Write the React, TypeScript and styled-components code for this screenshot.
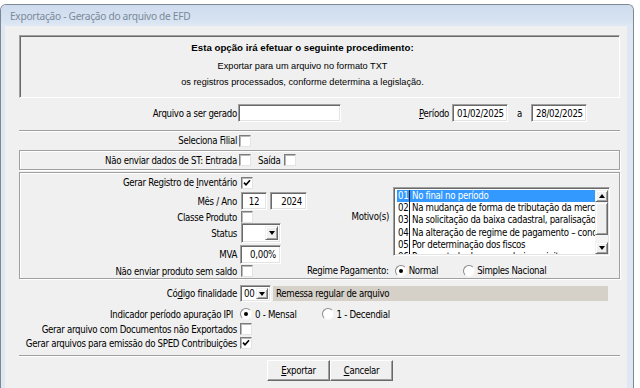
import React from 'react';
import styled, { createGlobalStyle } from 'styled-components';

const GlobalStyle = createGlobalStyle`
  html, body { margin: 0; padding: 0; background: #fff; }
  body {
    font-family: 'DejaVu Sans Condensed', 'DejaVu Sans', sans-serif;
    font-size: 9.6px;
    letter-spacing: -0.3px;
    color: #000;
  }
  * { box-sizing: border-box; }
`;

// Window chrome
const Window = styled.div`
  margin-top: 4px;
  width: 634px;
  height: 384px;
  display: flex;
  flex-direction: column;
  border: 1px solid #7d8895;
  border-bottom: none;
  border-radius: 6px 6px 0 0;
  background: #dfe8f2;
  overflow: hidden;
`;

const TitleBar = styled.div`
  height: 21px;
  flex: none;
  display: flex;
  align-items: center;
  padding-left: 9px;
  background: linear-gradient(#cfdcee, #d7e3f2 75%, #e0e9f4);
  color: #7b8998;
  font-family: 'Noto Sans', sans-serif;
  font-size: 10.2px;
  letter-spacing: -0.3px;
`;

const Client = styled.div`
  flex: 1;
  margin: 0 6px 0 4px;
  padding: 9px 7px 0 14px;
  background: #f0f0f0;
  display: flex;
  flex-direction: column;
`;

// Info panel at the top
const InfoPanel = styled.div`
  height: 63px;
  flex: none;
  display: flex;
  flex-direction: column;
  align-items: center;
  padding-right: 34px;
  border: 1px solid;
  border-color: #a0a0a0 #fff #fff #a0a0a0;
  box-shadow: inset 1px 1px 0 #696969;
  font-family: 'Liberation Sans', Arial, sans-serif;
  font-size: 9.2px;
  letter-spacing: 0;
  line-height: 13px;
`;

const InfoLine = styled.div<{ $mt: number; $bold?: boolean }>`
  margin-top: ${p => p.$mt}px;
  font-weight: ${p => (p.$bold ? 700 : 400)};
  font-size: ${p => (p.$bold ? '9.7px' : 'inherit')};
`;

// Form rows
const Row = styled.div<{ $h: number; $mt?: number }>`
  display: flex;
  align-items: center;
  height: ${p => p.$h}px;
  margin-top: ${p => p.$mt ?? 0}px;
  flex: none;
  white-space: nowrap;
`;

const Label = styled.span<{ $w?: number }>`
  width: ${p => p.$w ?? 218}px;
  flex: none;
  text-align: right;
  white-space: nowrap;
`;

const Text = styled.span<{ $ml?: number }>`
  margin-left: ${p => p.$ml ?? 0}px;
`;

const Etched = styled.div<{ $mt: number }>`
  height: 2px;
  margin-top: ${p => p.$mt}px;
  flex: none;
  border-top: 1px solid #a0a0a0;
  border-bottom: 1px solid #fff;
`;

const GroupBox = styled.div<{ $h: number; $mt: number }>`
  height: ${p => p.$h}px;
  margin-top: ${p => p.$mt}px;
  flex: none;
  border: 1px solid #a0a0a0;
  box-shadow: inset 1px 1px 0 #fff, 1px 1px 0 #fff;
`;

const Sunken = styled.div<{ $w: number; $h: number; $ml?: number; $align?: string }>`
  width: ${p => p.$w}px;
  height: ${p => p.$h}px;
  margin-left: ${p => p.$ml ?? 0}px;
  flex: none;
  display: flex;
  align-items: center;
  justify-content: ${p => p.$align ?? 'flex-start'};
  padding: 0 4px;
  background: #fff;
  border: 1px solid;
  border-color: #a0a0a0 #fff #fff #a0a0a0;
  box-shadow: inset 1px 1px 0 #696969, inset -1px -1px 0 #e3e3e3;
`;

const Check = styled.span<{ $ml?: number }>`
  width: 12px;
  height: 12px;
  margin-left: ${p => p.$ml ?? 2}px;
  flex: none;
  display: flex;
  align-items: center;
  justify-content: center;
  background: #fff;
  border: 1px solid;
  border-color: #7c7c7c #e4e4e4 #e4e4e4 #7c7c7c;
  box-shadow: inset 1px 1px 0 #b8b8b8;
`;

const RadioCircle = styled.span<{ $on?: boolean; $ml?: number }>`
  width: 12px;
  height: 12px;
  margin-left: ${p => p.$ml ?? 0}px;
  flex: none;
  display: flex;
  align-items: center;
  justify-content: center;
  border-radius: 50%;
  background: #fff;
  border: 1px solid;
  border-color: #8a8a8a #f6f6f6 #f6f6f6 #8a8a8a;
  &::after {
    content: '';
    width: 4px;
    height: 4px;
    border-radius: 50%;
    background: ${p => (p.$on ? '#000' : 'transparent')};
  }
`;

const Arrow = styled.span<{ $up?: boolean }>`
  width: 0;
  height: 0;
  border-left: 3.5px solid transparent;
  border-right: 3.5px solid transparent;
  ${p => (p.$up ? 'border-bottom: 4px solid #000;' : 'border-top: 4px solid #000;')}
`;

const RaisedBtn = styled.span<{ $w: number; $h: number }>`
  width: ${p => p.$w}px;
  height: ${p => p.$h}px;
  flex: none;
  display: flex;
  align-items: center;
  justify-content: center;
  background: #f0f0f0;
  border: 1px solid;
  border-color: #f0f0f0 #696969 #696969 #f0f0f0;
  box-shadow: inset 1px 1px 0 #fff, inset -1px -1px 0 #a0a0a0;
`;

const Combo = styled.div<{ $w: number; $h: number; $ml?: number }>`
  width: ${p => p.$w}px;
  height: ${p => p.$h}px;
  margin-left: ${p => p.$ml ?? 0}px;
  flex: none;
  display: flex;
  align-items: center;
  padding: 2px;
  background: #fff;
  border: 1px solid;
  border-color: #a0a0a0 #fff #fff #a0a0a0;
  box-shadow: inset 1px 1px 0 #696969, inset -1px -1px 0 #e3e3e3;
`;

const ComboText = styled.span`
  flex: 1;
  padding-left: 1px;
`;

const DescPanel = styled.div`
  width: 335px;
  height: 15px;
  margin-left: 2px;
  padding-left: 3px;
  display: flex;
  align-items: center;
  background: #d6d1c8;
`;

// Inventory group
const Columns = styled.div`
  display: flex;
  height: 100%;
`;

const LeftCol = styled.div`
  width: 286px;
  flex: none;
  display: flex;
  flex-direction: column;
`;

const RightCol = styled.div`
  flex: 1;
  display: flex;
  flex-direction: column;
  padding-right: 9px;
`;

const MotivoRow = styled.div`
  display: flex;
  justify-content: flex-end;
  align-items: center;
  margin-top: 14px;
  gap: 4px;
`;

const MotivoLabel = styled.span`
  padding-bottom: 10px;
`;

const ListBox = styled.div`
  width: 217px;
  height: 69px;
  display: flex;
  padding: 2px 1px 1px 2px;
  background: #fff;
  border: 1px solid;
  border-color: #a0a0a0 #fff #fff #a0a0a0;
  box-shadow: inset 1px 1px 0 #696969, inset -1px -1px 0 #e3e3e3;
  overflow: hidden;
`;

const Items = styled.div`
  flex: 1;
  overflow: hidden;
  padding-left: 1px;
`;

const Item = styled.div<{ $sel?: boolean }>`
  display: flex;
  height: 12.2px;
  line-height: 12px;
  white-space: nowrap;
  background: ${p => (p.$sel ? '#3399ff' : 'transparent')};
  color: ${p => (p.$sel ? '#fff' : '#000')};
`;

const Code = styled.span`
  width: 13px;
  flex: none;
  padding-left: 1px;
  border-right: 1px solid #1a1a1a;
`;

const Desc = styled.span`
  padding-left: 2px;
`;

const ScrollBar = styled.div`
  width: 13px;
  flex: none;
  display: flex;
  flex-direction: column;
  background: #f4f4f4;
`;

const Thumb = styled.span`
  height: 33px;
  flex: none;
  background: #f0f0f0;
  border: 1px solid;
  border-color: #f0f0f0 #696969 #696969 #f0f0f0;
  box-shadow: inset 1px 1px 0 #fff, inset -1px -1px 0 #a0a0a0;
`;

const Track = styled.span`
  flex: 1;
`;

// Buttons
const ButtonRow = styled.div`
  display: flex;
  margin-top: 3px;
  padding-left: 248px;
`;

const Button = styled.button`
  width: 63px;
  height: 21px;
  padding: 0;
  font: inherit;
  letter-spacing: inherit;
  color: #000;
  background: #f0f0f0;
  border: 1px solid;
  border-color: #fff #696969 #696969 #fff;
  box-shadow: inset -1px -1px 0 #a0a0a0;
`;

const CheckMark = () => (
  <svg width="8" height="8" viewBox="0 0 8 8">
    <path d="M1 3.6 L3 5.8 L7 1.2" fill="none" stroke="#000" strokeWidth="1.6" />
  </svg>
);

const motivos = [
  ['01', 'No final no período'],
  ['02', 'Na mudança de forma de tributação da mercadoria'],
  ['03', 'Na solicitação da baixa cadastral, paralisação'],
  ['04', 'Na alteração de regime de pagamento – condição'],
  ['05', 'Por determinação dos fiscos'],
  ['06', 'Para controle das mercadorias sujeitas'],
];

export default function App() {
  return (
    <>
      <GlobalStyle />
      <Window>
        <TitleBar>Exportação - Geração do arquivo de EFD</TitleBar>
        <Client>
          <InfoPanel>
            <InfoLine $mt={5} $bold>Esta opção irá efetuar o seguinte procedimento:</InfoLine>
            <InfoLine $mt={6}>Exportar para um arquivo no formato TXT</InfoLine>
            <InfoLine $mt={3}>os registros processados, conforme determina a legislação.</InfoLine>
          </InfoPanel>

          <Row $h={18} $mt={6}>
            <Label>Arquivo a ser <u>g</u>erado</Label>
            <Sunken $w={103} $h={18} $ml={1} />
            <Text $ml={78}><u>P</u>eríodo</Text>
            <Sunken $w={56} $h={18} $ml={3}>01/02/2025</Sunken>
            <Text $ml={9}>a</Text>
            <Sunken $w={56} $h={18} $ml={9}>28/02/2025</Sunken>
          </Row>

          <Etched $mt={8} />

          <Row $h={13} $mt={2}>
            <Label>Seleciona Filial</Label>
            <Check />
          </Row>

          <GroupBox $h={20} $mt={3}>
            <Row $h={18}>
              <Label $w={217}>Não enviar dados de ST: Entrada</Label>
              <Check />
              <Text $ml={7}>Saída</Text>
              <Check $ml={4} />
            </Row>
          </GroupBox>

          <GroupBox $h={107} $mt={2}>
            <Columns>
              <LeftCol>
                <Row $h={13} $mt={3}>
                  <Label $w={217}>Gerar Registro de <u>I</u>nventário</Label>
                  <Check $ml={4}><CheckMark /></Check>
                </Row>
                <Row $h={18} $mt={3}>
                  <Label $w={217}>Mês / Ano</Label>
                  <Sunken $w={26} $h={18} $ml={4} $align="center">12</Sunken>
                  <Sunken $w={37} $h={18} $ml={3} $align="flex-end">2024</Sunken>
                </Row>
                <Row $h={12} $mt={1}>
                  <Label $w={217}>Classe Produto</Label>
                  <Check $ml={4} />
                </Row>
                <Row $h={20}>
                  <Label $w={217}>Status</Label>
                  <Combo $w={40} $h={20} $ml={4}>
                    <ComboText />
                    <RaisedBtn $w={13} $h={14}><Arrow /></RaisedBtn>
                  </Combo>
                </Row>
                <Row $h={19} $mt={2}>
                  <Label $w={217}>MVA</Label>
                  <Sunken $w={41} $h={19} $ml={3} $align="flex-end">0,00%</Sunken>
                </Row>
                <Row $h={12} $mt={1}>
                  <Label $w={217}>Não enviar produto sem saldo</Label>
                  <Check $ml={4} />
                </Row>
              </LeftCol>

              <RightCol>
                <MotivoRow>
                  <MotivoLabel>Motivo(s)</MotivoLabel>
                  <ListBox>
                    <Items>
                      {motivos.map(([c, d], i) => (
                        <Item key={c} $sel={i === 0}>
                          <Code>{c}</Code>
                          <Desc>{d}</Desc>
                        </Item>
                      ))}
                    </Items>
                    <ScrollBar>
                      <RaisedBtn $w={13} $h={12}><Arrow $up /></RaisedBtn>
                      <Thumb />
                      <Track />
                      <RaisedBtn $w={13} $h={12}><Arrow /></RaisedBtn>
                    </ScrollBar>
                  </ListBox>
                </MotivoRow>
                <Row $h={13} $mt={8}>
                  <Text $ml={1}>Regime Pagamento:</Text>
                  <RadioCircle $on $ml={6} />
                  <Text $ml={2}>Normal</Text>
                  <RadioCircle $ml={25} />
                  <Text $ml={2}>Simples Nacional</Text>
                </Row>
              </RightCol>
            </Columns>
          </GroupBox>

          <Row $h={17} $mt={6}>
            <Label>Có<u>d</u>igo finalidade</Label>
            <Combo $w={31} $h={17} $ml={3}>
              <ComboText>00</ComboText>
              <RaisedBtn $w={12} $h={11}><Arrow /></RaisedBtn>
            </Combo>
            <DescPanel>Remessa regular de arquivo</DescPanel>
          </Row>

          <Row $h={14} $mt={5}>
            <Label $w={214}>Indicador período apuração IPI</Label>
            <RadioCircle $on $ml={7} />
            <Text $ml={3}>0 - Mensal</Text>
            <RadioCircle $ml={25} />
            <Text $ml={3}>1 - Decendial</Text>
          </Row>

          <Row $h={12} $mt={2}>
            <Label>Gerar arquivo com Documentos não Exportados</Label>
            <Check $ml={3} />
          </Row>

          <Row $h={12} $mt={2}>
            <Label>Gerar arquivos para emissão do SPED Contribuições</Label>
            <Check $ml={3}><CheckMark /></Check>
          </Row>

          <Etched $mt={6} />

          <ButtonRow>
            <Button><u>E</u>xportar</Button>
            <Button><u>C</u>ancelar</Button>
          </ButtonRow>
        </Client>
      </Window>
    </>
  );
}
